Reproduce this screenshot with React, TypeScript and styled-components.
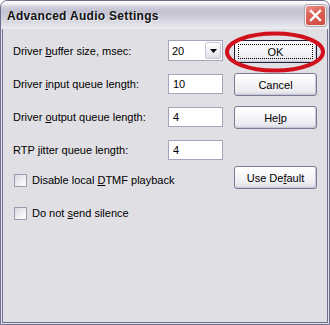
import React from 'react';
import styled, { createGlobalStyle } from 'styled-components';

const Global = createGlobalStyle`
  html, body { margin: 0; padding: 0; background: #ffffff; }
  body { width: 330px; height: 325px; overflow: hidden; }
  * { box-sizing: border-box; }
`;

const Window = styled.div`
  position: relative;
  width: 330px;
  height: 325px;
  border: 1px solid #6f6e8e;
  border-radius: 7px 7px 0 0;
  background: #e4e4ec;
  display: flex;
  flex-direction: column;
  overflow: hidden;
  font-family: "Liberation Sans", Arial, sans-serif;
  font-size: 11px;
  color: #000;
`;

const TitleBar = styled.div`
  height: 28px;
  flex: none;
  display: flex;
  align-items: flex-start;
  justify-content: space-between;
  padding: 0 3px 0 6px;
  border-radius: 6px 6px 0 0;
  background: linear-gradient(
    to bottom,
    #ffffff 0%,
    #f6f6f9 8%,
    #cfcfdc 22%,
    #c2c2d2 36%,
    #cacad8 55%,
    #dcdce6 78%,
    #ececf2 100%
  );
`;

const Title = styled.span`
  margin-top: 8px;
  font-family: "Liberation Sans", Arial, sans-serif;
  font-weight: bold;
  font-size: 12px;
  letter-spacing: 0.3px;
  color: #111;
  text-shadow: 1px 1px 0 rgba(255, 255, 255, 0.6);
`;

const CloseButton = styled.div`
  margin-top: 4px;
  width: 21px;
  height: 21px;
  border: 1px solid #f4f0f0;
  border-radius: 3px;
  background: linear-gradient(160deg, #ea9288 0%, #dc6258 40%, #cd4a40 100%);
  box-shadow: 0 0 0 1px #b4a8b0;
  display: flex;
  align-items: center;
  justify-content: center;
`;

const Body = styled.div`
  position: relative;
  flex: 1;
  margin: 0 1px 1px;
  border: 1px solid #6f6e8e;
  border-top: none;
  background: #e0dfe3;
  display: flex;
  padding: 11px 0 0 10px;
`;

const FormColumn = styled.div`
  width: 221px;
  display: flex;
  flex-direction: column;
  gap: 13px;
`;

const Row = styled.div<{ $h?: number }>`
  height: ${(p) => p.$h ?? 20}px;
  display: flex;
  align-items: center;
`;

const Label = styled.label`
  width: 155px;
  white-space: nowrap;
`;

const U = styled.span`
  text-decoration: underline;
`;

const TextBox = styled.input`
  width: 55px;
  height: 20px;
  border: 1px solid #a4a4ba;
  background: #fff;
  padding: 0 0 0 4px;
  margin: 0;
  font-family: "Liberation Sans", Arial, sans-serif;
  font-size: 11px;
  color: #000;
  outline: none;
`;

const Combo = styled.div`
  width: 55px;
  height: 21px;
  border: 1px solid #a4a4ba;
  background: #fff;
  display: flex;
  align-items: center;
  justify-content: space-between;
  padding: 0 1px 0 3px;
`;

const DropButton = styled.div`
  width: 16px;
  height: 17px;
  border: 1px solid #c6c6d6;
  border-radius: 2px;
  background: linear-gradient(to bottom, #ffffff 0%, #f1f1f5 55%, #dcdce4 100%);
  display: flex;
  align-items: center;
  justify-content: center;
`;

const CheckRow = styled.div<{ $mt: number }>`
  margin-top: ${(p) => p.$mt}px;
  height: 20px;
  display: flex;
  align-items: center;
  padding-left: 1px;
  gap: 5px;
  white-space: nowrap;
`;

const CheckBox = styled.span`
  width: 13px;
  height: 13px;
  border: 1px solid #9a9ab0;
  background: linear-gradient(135deg, #d6d6de 0%, #f2f2f6 60%, #ffffff 100%);
`;

const ButtonColumn = styled.div`
  width: 83px;
  display: flex;
  flex-direction: column;
  gap: 10px;
`;

const Button = styled.button<{ $default?: boolean; $mt?: number }>`
  position: relative;
  width: 83px;
  height: 23px;
  margin: ${(p) => p.$mt ?? 0}px 0 0;
  padding: 0;
  border: 1px solid ${(p) => (p.$default ? '#1f1f33' : '#7a7996')};
  border-radius: 3px;
  background: linear-gradient(to bottom, #ffffff 0%, #f6f6f9 45%, #ececf1 80%, #d8d8e2 100%);
  box-shadow: inset -1px -1px 0 #c9c8d8;
  font-family: "Liberation Sans", Arial, sans-serif;
  font-size: 11px;
  color: #000;
  display: flex;
  align-items: center;
  justify-content: center;
`;

const FocusRect = styled.span`
  position: absolute;
  inset: 3px;
  border: 1px dotted #000;
`;

const Annotation = styled.svg`
  position: absolute;
  left: 222px;
  top: 2px;
  pointer-events: none;
`;

export default function App() {
  return (
    <>
      <Global />
      <Window>
        <TitleBar>
          <Title>Advanced Audio Settings</Title>
          <CloseButton>
            <svg width="13" height="13" viewBox="0 0 13 13">
              <path d="M2 2 L11 11 M11 2 L2 11" stroke="#fff" strokeWidth="2.4" strokeLinecap="square" />
            </svg>
          </CloseButton>
        </TitleBar>
        <Body>
          <FormColumn>
            <Row $h={21}>
              <Label>
                Driver <U>b</U>uffer size, msec:
              </Label>
              <Combo>
                <span>20</span>
                <DropButton>
                  <svg width="7" height="4" viewBox="0 0 7 4">
                    <path d="M0 0 H7 L3.5 4 Z" fill="#000" />
                  </svg>
                </DropButton>
              </Combo>
            </Row>
            <Row>
              <Label>
                Driver <U>i</U>nput queue length:
              </Label>
              <TextBox readOnly defaultValue="10" />
            </Row>
            <Row>
              <Label>
                Driver <U>o</U>utput queue length:
              </Label>
              <TextBox readOnly defaultValue="4" />
            </Row>
            <Row>
              <Label>
                RTP <U>j</U>itter queue length:
              </Label>
              <TextBox readOnly defaultValue="4" />
            </Row>
            <CheckRow $mt={-3}>
              <CheckBox />
              <span>
                Disable local <U>D</U>TMF playback
              </span>
            </CheckRow>
            <CheckRow $mt={0}>
              <CheckBox />
              <span>
                Do not <U>s</U>end silence
              </span>
            </CheckRow>
          </FormColumn>
          <ButtonColumn>
            <Button $default>
              <FocusRect />
              OK
            </Button>
            <Button>Cancel</Button>
            <Button>
              He<U>l</U>p
            </Button>
            <Button $mt={27}>
              Use De<U>f</U>ault
            </Button>
          </ButtonColumn>
          <Annotation width="104" height="44" viewBox="0 0 104 44">
            <ellipse cx="50" cy="21" rx="48" ry="18.5" fill="none" stroke="#d0101c" strokeWidth="4" />
          </Annotation>
        </Body>
      </Window>
    </>
  );
}
